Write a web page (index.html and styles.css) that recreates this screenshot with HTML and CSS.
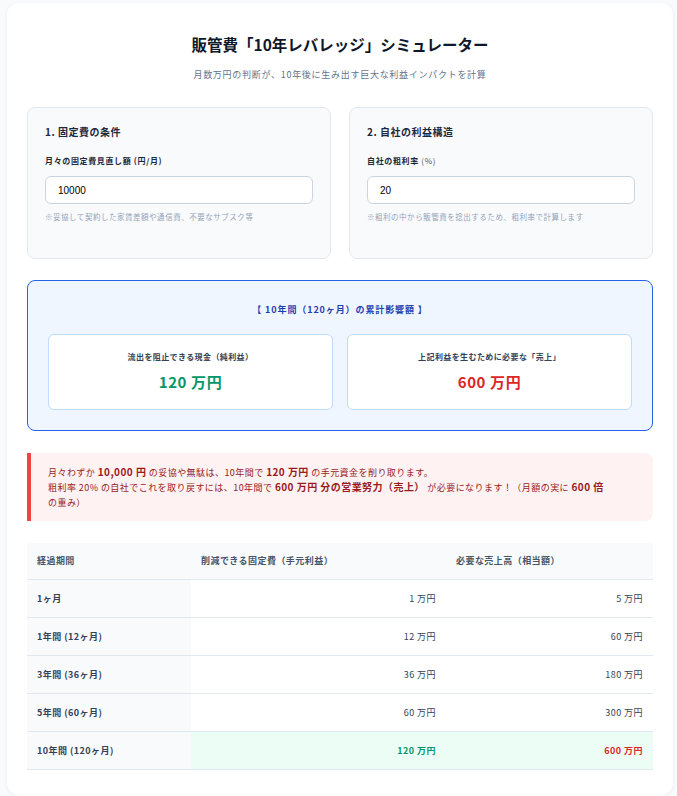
FILE: index.html
```html
<!DOCTYPE html>
<html lang="ja">
<head>
    <meta charset="UTF-8">
    <meta name="viewport" content="width=device-width, initial-scale=1.0">
    <title>販管費「10年レバレッジ」シミュレーター</title>
    <link rel="stylesheet" href="styles.css">
</head>
<body>
    <div class="container">
        <header>
            <h1>販管費「10年レバレッジ」シミュレーター</h1>
            <p class="lead">月数万円の判断が、10年後に生み出す巨大な利益インパクトを計算</p>
        </header>

        <div class="inputs">
            <div class="panel">
                <h2>1. 固定費の条件</h2>
                <label for="cost">月々の固定費見直し額 <span>(円/月)</span></label>
                <input type="number" id="cost" value="10000">
                <p class="hint">※妥協して契約した家賃差額や通信費、不要なサブスク等</p>
            </div>
            <div class="panel">
                <h2>2. 自社の利益構造</h2>
                <label for="rate">自社の粗利率 <span class="light">(%)</span></label>
                <input type="number" id="rate" value="20">
                <p class="hint">※粗利の中から販管費を捻出するため、粗利率で計算します</p>
            </div>
        </div>

        <div class="result">
            <h3>【 10年間（120ヶ月）の累計影響額 】</h3>
            <div class="result-cards">
                <div class="result-card">
                    <p>流出を阻止できる現金（純利益）</p>
                    <strong class="profit" id="profit10">120 万円</strong>
                </div>
                <div class="result-card">
                    <p>上記利益を生むために必要な「売上」</p>
                    <strong class="sales" id="sales10">600 万円</strong>
                </div>
            </div>
        </div>

        <div class="alert" id="message">
            月々わずか <b>10,000 円</b> の妥協や無駄は、10年間で <b>120 万円</b> の手元資金を削り取ります。<br>
            粗利率 20% の自社でこれを取り戻すには、10年間で <b>600 万円 分の営業努力（売上）</b> が必要になります！（月額の実に <b>600 倍</b> <span class="nowrap">の重み）</span>
        </div>

        <table>
            <thead>
                <tr>
                    <th>経過期間</th>
                    <th>削減できる固定費（手元利益）</th>
                    <th>必要な売上高（相当額）</th>
                </tr>
            </thead>
            <tbody id="rows"></tbody>
        </table>
    </div>

    <script>
        const cost = document.querySelector('#cost');
        const rate = document.querySelector('#rate');
        const rows = document.querySelector('#rows');

        const periods = [
            { label: '1ヶ月', months: 1 },
            { label: '1年間 (12ヶ月)', months: 12 },
            { label: '3年間 (36ヶ月)', months: 36 },
            { label: '5年間 (60ヶ月)', months: 60 },
            { label: '10年間 (120ヶ月)', months: 120 }
        ];

        // 万円単位にそろえる
        function man(yen){
            return Math.round(yen / 10000).toLocaleString() + ' 万円';
        }

        function render(){
            let c = Number(cost.value) || 0;
            let r = Number(rate.value) || 1;
            let html = '';
            periods.forEach(p => {
                let profit = c * p.months;
                let sales = profit / (r / 100);
                let last = p.months == 120 ? ' class="total"' : '';
                html += '<tr' + last + '><td>' + p.label + '</td><td>' + man(profit) + '</td><td>' + man(sales) + '</td></tr>';
            });
            rows.innerHTML = html;
        }

        cost.addEventListener('input', render);
        rate.addEventListener('input', render);
        render();
    </script>
</body>
</html>
```

FILE: styles.css
```css
*{
    margin: 0px;
    padding: 0px;
    box-sizing: border-box;
}

body{
    background-color: #f8fafc;
    font-family: "Noto Sans CJK JP", "Noto Sans", sans-serif;
    color: #1e293b;
    padding: 3px 4px 0px 7px;
}

.container{
    background-color: #fff;
    border-radius: 12px;
    box-shadow: 0 1px 4px rgba(15, 23, 42, 0.06);
    padding: 30px 20px 25px;
}

header{
    text-align: center;
    margin-bottom: 25px;
}

h1{
    font-size: 15.5px;
    line-height: 22px;
    font-weight: 700;
    color: #0f172a;
}

.lead{
    margin-top: 13px;
    font-size: 9px;
    line-height: 14px;
    color: #64748b;
    letter-spacing: 0.08em;
}

/* 入力エリア */
.inputs{
    display: grid;
    grid-template-columns: 1fr 1fr;
    gap: 18px;
}

.panel{
    background-color: #f8fafc;
    border: 1px solid #e2e8f0;
    border-radius: 8px;
    padding: 17px 17px 36px;
}

h2{
    font-size: 10px;
    line-height: 14px;
    font-weight: 700;
    color: #1e293b;
    letter-spacing: 0.05em;
    margin-bottom: 16px;
}

label{
    display: block;
    font-size: 8px;
    line-height: 12px;
    font-weight: 700;
    color: #1e293b;
    letter-spacing: 0.08em;
    margin-bottom: 9px;
}

label .light{
    font-weight: 400;
    color: #475569;
}

input{
    display: block;
    width: 100%;
    height: 28px;
    border: 1px solid #cbd5e1;
    border-radius: 6px;
    background-color: #fff;
    padding: 0px 12px;
    font-family: "Liberation Sans", "Noto Sans CJK JP", sans-serif;
    font-size: 10px;
    color: #000;
    outline: none;
}

.hint{
    margin-top: 8px;
    font-size: 7.5px;
    line-height: 10px;
    color: #94a3b8;
    letter-spacing: 0.07em;
}

/* 累計結果 */
.result{
    margin-top: 21px;
    background-color: #eff6ff;
    border: 1px solid #2563eb;
    border-radius: 8px;
    padding: 22px 20px 20px;
}

h3{
    text-align: center;
    font-size: 9px;
    line-height: 14px;
    font-weight: 700;
    color: #1e40af;
    letter-spacing: 0.1em;
    margin-bottom: 17px;
}

.result-cards{
    display: grid;
    grid-template-columns: 1fr 1fr;
    gap: 14px;
}

.result-card{
    background-color: #fff;
    border: 1px solid #bfdbfe;
    border-radius: 6px;
    height: 76px;
    text-align: center;
    padding-top: 16px;
}

.result-card p{
    font-size: 8px;
    line-height: 12px;
    font-weight: 700;
    color: #334155;
    letter-spacing: 0.05em;
}

.result-card strong{
    display: block;
    margin-top: 8px;
    font-size: 15px;
    line-height: 22px;
    font-weight: 700;
    letter-spacing: 0.04em;
}

.profit{
    color: #059669;
}

.sales{
    color: #dc2626;
}

/* 警告メッセージ */
.alert{
    margin-top: 22px;
    background-color: #fef2f2;
    border-left: 4px solid #ef4444;
    border-radius: 0px 8px 8px 0px;
    padding: 12px 17px 11px;
    font-size: 9px;
    line-height: 15px;
    color: #991b1b;
    letter-spacing: 0.05em;
}

.alert b{
    font-size: 10px;
    line-height: 1;
    font-weight: 700;
}

.nowrap{
    white-space: nowrap;
}

/* 推移テーブル */
table{
    margin-top: 22px;
    width: 100%;
    border-collapse: collapse;
    font-size: 9px;
    letter-spacing: 0.05em;
}

th{
    background-color: #f8fafc;
    height: 36px;
    text-align: left;
    font-weight: 700;
    color: #475569;
    padding: 0px 10px;
    border-bottom: 1px solid #e2e8f0;
}

th:nth-child(1){
    width: 164px;
}

th:nth-child(2){
    width: 255px;
}

td{
    height: 38px;
    padding: 0px 10px;
    text-align: right;
    color: #334155;
    border-bottom: 1px solid #e2e8f0;
}

td:first-child{
    text-align: left;
    background-color: #f8fafc;
    font-weight: 700;
    color: #334155;
}

.total td{
    background-color: #ecfdf5;
    font-weight: 700;
}

.total td:first-child{
    background-color: #f8fafc;
}

.total td:nth-child(2){
    color: #059669;
}

.total td:nth-child(3){
    color: #dc2626;
}
```
